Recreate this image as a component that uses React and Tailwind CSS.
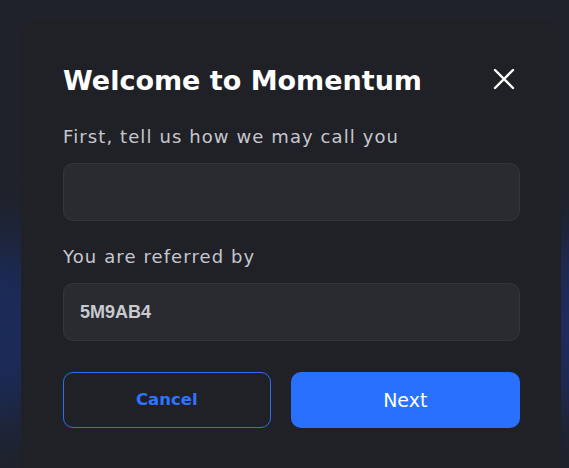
import React from "react";

export default function App() {
  return (
    <div
      className="relative w-[569px] h-[468px] overflow-hidden bg-[#1f222b]"
      style={{ fontFamily: '"DejaVu Sans", Inter, sans-serif' }}
    >
      <div className="absolute left-[-120px] top-[240px] w-[200px] h-[180px] rounded-full bg-[#1b2c5e] blur-[30px] opacity-90" />
      <div className="absolute right-[-120px] top-[240px] w-[200px] h-[170px] rounded-full bg-[#1d2d60] blur-[30px] opacity-90" />
      <div className="relative pt-[20px] pl-[21px]">
        <div className="w-[540px] h-[470px] rounded-[16px] bg-[#202127] pl-[42px] pr-[41px] pt-[45px]">
          <div className="flex items-center justify-between h-[32px]">
            <h1 className="text-[27px] font-bold text-white leading-[32px]">
              Welcome to Momentum
            </h1>
            <svg width="22" height="22" viewBox="0 0 22 22" className="mr-[5px] mt-[-4px]">
              <path d="M2 2 L20 20 M20 2 L2 20" stroke="#ffffff" strokeWidth="2.4" strokeLinecap="round" />
            </svg>
          </div>
          <div className="mt-[28px] text-[18px] leading-[24px] tracking-[1.1px] text-[#c6c7cd]">
            First, tell us how we may call you
          </div>
          <div className="mt-[14px] h-[58px] rounded-[10px] bg-[#2a2b31] border border-[#35363c]" />
          <div className="mt-[24px] text-[18px] leading-[24px] tracking-[1.1px] text-[#c6c7cd]">
            You are referred by
          </div>
          <div className="mt-[14px] h-[58px] rounded-[10px] bg-[#2a2b31] border border-[#35363c] flex items-center pl-[16px]">
            <span
              className="text-[18px] font-bold text-[#c9cad0]"
              style={{ fontFamily: '"Liberation Sans", Arial, sans-serif' }}
            >
              5M9AB4
            </span>
          </div>
          <div className="mt-[31px] flex gap-[20px]">
            <button className="w-[208px] h-[56px] rounded-[10px] border border-[#2a6ff0] text-[#2e74ff] text-[16.5px] font-bold">
              Cancel
            </button>
            <button className="w-[230px] h-[56px] rounded-[10px] bg-[#2970ff] text-white text-[19px] font-normal">
              Next
            </button>
          </div>
        </div>
      </div>
    </div>
  );
}
